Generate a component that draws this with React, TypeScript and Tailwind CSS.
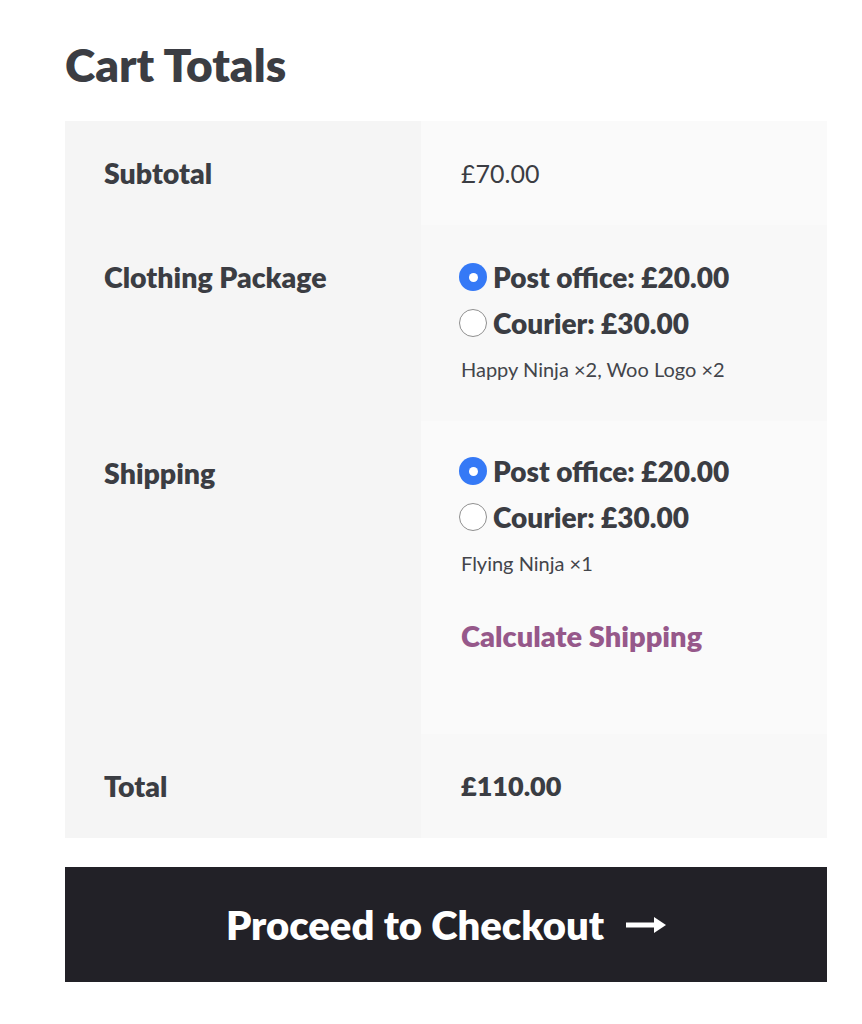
import React from "react";

const FONT = { fontFamily: "Lato, 'Noto Sans', sans-serif" };

function Radio({ checked }: { checked?: boolean }) {
  if (checked) {
    return (
      <span className="-ml-[2px] flex h-[28px] w-[28px] shrink-0 items-center justify-center rounded-full bg-[#3579f6]">
        <span className="h-[9px] w-[9px] rounded-full bg-white" />
      </span>
    );
  }
  return <span className="-ml-[2px] h-[28px] w-[28px] shrink-0 rounded-full border-[1.5px] border-[#8f8f8f] bg-white" />;
}

function ShippingOptions({ items }: { items: string }) {
  return (
    <div>
      <label className="flex h-[46px] items-center gap-[6px] text-[28px] font-extrabold">
        <Radio checked />
        <span>Post office: £20.00</span>
      </label>
      <label className="flex h-[46px] items-center gap-[6px] text-[28px] font-extrabold">
        <Radio />
        <span>Courier: £30.00</span>
      </label>
      <p className="flex h-[46px] items-center text-[20px] text-[#43454b]">{items}</p>
    </div>
  );
}

function Row({ label, children, tdBg }: { label: string; children: React.ReactNode; tdBg: string }) {
  return (
    <div className="grid grid-cols-[356px_1fr]">
      <div className="bg-[#f5f5f5] px-[39px] py-[36px] text-[28.5px] font-extrabold leading-[32px]">{label}</div>
      <div className={`${tdBg} px-[40px] py-[36px] text-[25px] leading-[32px]`}>{children}</div>
    </div>
  );
}

export default function App() {
  return (
    <div className="min-h-screen bg-white text-[#3b3d43]" style={FONT}>
      <div className="ml-[65px] w-[762px] pt-[42px]">
        <h2 className="text-[46px] font-extrabold leading-[46px]">Cart Totals</h2>

        <div className="mt-[33px]">
          <Row label="Subtotal" tdBg="bg-[#fafafa]">
            <span>£70.00</span>
          </Row>
          <Row label="Clothing Package" tdBg="bg-[#f8f8f8]">
            <div className="-my-[7px]">
              <ShippingOptions items="Happy Ninja ×2, Woo Logo ×2" />
            </div>
          </Row>
          <Row label="Shipping" tdBg="bg-[#fafafa]">
            <div className="-mt-[9px] -mb-[7px]">
              <ShippingOptions items="Flying Ninja ×1" />
              <a className="mt-[34px] mb-[53px] block text-[29px] font-extrabold leading-[32px] text-[#96588a]">
                Calculate Shipping
              </a>
            </div>
          </Row>
          <Row label="Total" tdBg="bg-[#f8f8f8]">
            <span className="text-[27px] font-extrabold">£110.00</span>
          </Row>
        </div>

        <button className="mt-[29px] flex h-[115px] w-full items-center justify-center gap-[22px] bg-[#222127] text-[40px] font-extrabold text-white">
          <span>Proceed to Checkout</span>
          <svg width="40" height="18" viewBox="0 0 40 18" fill="white">
            <rect x="0" y="6.5" width="30" height="5" />
            <path d="M28 1l12 8-12 8z" />
          </svg>
        </button>
      </div>
    </div>
  );
}
